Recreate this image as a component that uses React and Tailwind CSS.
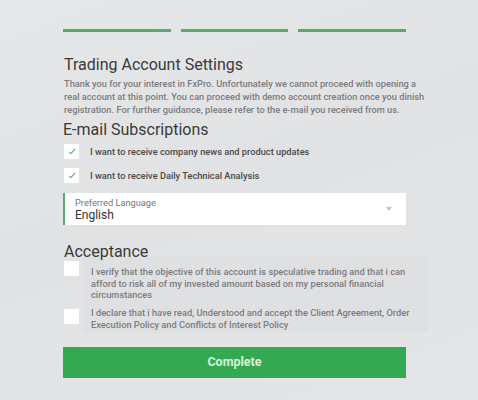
import React from "react";

const Check = ({ checked }) => (
  <div className="w-[15px] h-[15px] bg-white flex items-center justify-center shrink-0">
    {checked && (
      <svg width="8" height="7" viewBox="0 0 8 7" fill="none">
        <path d="M1 3.8 L3 5.6 L7 1.2" stroke="#4caf68" strokeWidth="1.1" />
      </svg>
    )}
  </div>
);

export default function App() {
  return (
    <div
      className="w-[478px] h-[400px] overflow-hidden bg-[linear-gradient(160deg,#e6e7e9_0%,#e1e2e4_45%,#e4e5e7_100%)] text-[#333]"
      style={{ fontFamily: "Roboto, 'Liberation Sans', sans-serif" }}
    >
      <div className="pl-[63px] w-[406px] pt-[29px]">
        <div className="flex gap-[10px]">
          <div className="h-[3px] w-[108px] bg-[#5aa86a]" />
          <div className="h-[3px] w-[108px] bg-[#5aa86a]" />
          <div className="h-[3px] w-[108px] bg-[#5aa86a]" />
        </div>

        <h1 className="mt-[22px] pl-[1px] text-[16px] leading-[22px] text-[#3a3a3a]">Trading Account Settings</h1>
        <p className="mt-[1px] pl-[1px] text-[9.25px] leading-[13px] font-medium text-[#7c7c80] w-[370px]">
          Thank you for your interest in FxPro. Unfortunately we cannot proceed with opening a real account at this point. You can proceed with demo account creation once you dinish registration. For further guidance, please refer to the e-mail you received from us.
        </p>

        <h2 className="mt-[3px] text-[16px] leading-[22px] text-[#3a3a3a]">E-mail Subscriptions</h2>

        <div className="mt-[3px] flex items-center gap-[11px] pl-[1px]">
          <Check checked />
          <span className="text-[9.25px] leading-[15px] font-medium text-[#4a4a4a]">I want to receive company news and product updates</span>
        </div>
        <div className="mt-[9px] flex items-center gap-[11px] pl-[1px]">
          <Check checked />
          <span className="text-[9.25px] leading-[15px] font-medium text-[#4a4a4a]">I want to receive Daily Technical Analysis</span>
        </div>

        <div className="mt-[10px] h-[32px] bg-white border-l-2 border-[#5aa86a] flex items-center justify-between pl-[10px] pr-[14px]">
          <div className="flex flex-col">
            <span className="text-[9.25px] leading-[11px] text-[#777]">Preferred Language</span>
            <span className="text-[12px] leading-[14px] text-[#333]">English</span>
          </div>
          <svg width="6" height="4" viewBox="0 0 6 4">
            <path d="M0 0 H6 L3 4 Z" fill="#c4c4c4" />
          </svg>
        </div>

        <h2 className="relative z-10 mt-[19px] pl-[1px] text-[16px] leading-[16px] text-[#3a3a3a]">Acceptance</h2>

        <div className="-mt-[3px] flex">
          <div className="flex flex-col gap-[33px] pt-[4px] pl-[1px] w-[20px] shrink-0">
            <Check />
            <Check />
          </div>
          <div className="bg-[#dfe0e2] w-[345px] shrink-0 pl-[8px] pr-[12px] pt-[9px] pb-[3px] text-[9.25px] leading-[11.5px] font-medium text-[#7c7c80]">
            <p>I verify that the objective of this account is speculative trading and that i can afford to risk all of my invested amount based on my personal financial circumstances</p>
            <p className="mt-[6.5px]">I declare that i have read, Understood and accept the Client Agreement, Order Execution Policy and Conflicts of Interest Policy</p>
          </div>
        </div>

        <button className="mt-[14px] w-[343px] h-[31px] bg-[#34a853] text-[#d9f5d9] text-[12.5px] font-bold">
          Complete
        </button>
      </div>
    </div>
  );
}
